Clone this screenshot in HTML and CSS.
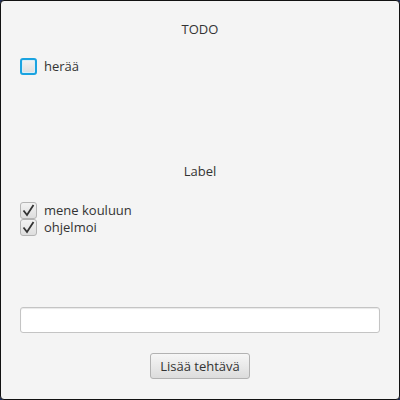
FILE: index.html
```html
<!DOCTYPE html>
<html>
<head>
<meta charset="utf-8">
<link rel="stylesheet" href="styles.css">
</head>
<body>
<div class="window">
  <div class="title">TODO</div>
  <div class="list list-open">
    <label class="row">
      <span class="box focused"></span>
      <span class="text">herää</span>
    </label>
  </div>
  <div class="title label-title">Label</div>
  <div class="list list-done">
    <label class="row">
      <span class="box"><svg viewBox="0 0 17 17" width="17" height="17"><path d="M3.5 8.5 L7 13 L13.5 3" fill="none" stroke="#333" stroke-width="1.8"/></svg></span>
      <span class="text">mene kouluun</span>
    </label>
    <label class="row">
      <span class="box"><svg viewBox="0 0 17 17" width="17" height="17"><path d="M3.5 8.5 L7 13 L13.5 3" fill="none" stroke="#333" stroke-width="1.8"/></svg></span>
      <span class="text">ohjelmoi</span>
    </label>
  </div>
  <div class="field"></div>
  <div class="actions"><button class="btn">Lisää tehtävä</button></div>
</div>
</body>
</html>
```
FILE: styles.css
```css
html, body {
  margin: 0;
  padding: 0;
  background: #22305a;
}
.window {
  box-sizing: border-box;
  width: 400px;
  height: 400px;
  border: 1px solid #111;
  border-radius: 4px;
  background: #f4f4f4;
  padding: 0 19px;
  font-family: "Open Sans", "Noto Sans", sans-serif;
  font-size: 13px;
  color: #333;
  display: flex;
  flex-direction: column;
}
.title {
  text-align: center;
  height: 18px;
  line-height: 18px;
  margin-top: 19px;
}
.label-title {
  margin-top: 87px;
}
.list-open {
  margin-top: 20px;
}
.list-done {
  margin-top: 22px;
}
.row {
  display: flex;
  align-items: center;
  gap: 7px;
  height: 17px;
  line-height: 17px;
}
.box {
  box-sizing: border-box;
  width: 17px;
  height: 17px;
  border: 1px solid #b4b4b4;
  border-radius: 3px;
  background: linear-gradient(#f2f2f2, #dedede);
  position: relative;
  flex: none;
}
.box svg {
  position: absolute;
  left: -1px;
  top: -1px;
}
.box.focused {
  border: 2px solid #1aa3e0;
  box-shadow: inset 0 0 0 1px #d8eef8;
}
.field {
  margin-top: 71px;
  height: 26px;
  box-sizing: border-box;
  background: #fff;
  border: 1px solid #c4c4c4;
  border-radius: 3px;
  box-shadow: inset 0 1px 1px #e8e8e8;
}
.actions {
  margin-top: 20px;
  display: flex;
  justify-content: center;
}
.btn {
  width: 100px;
  height: 26px;
  box-sizing: border-box;
  border: 1px solid #b2b2b2;
  border-radius: 3px;
  background: linear-gradient(#f6f6f6, #dcdcdc);
  font-family: "Open Sans", "Noto Sans", sans-serif;
  font-size: 13px;
  color: #333;
  padding: 0;
}
```
